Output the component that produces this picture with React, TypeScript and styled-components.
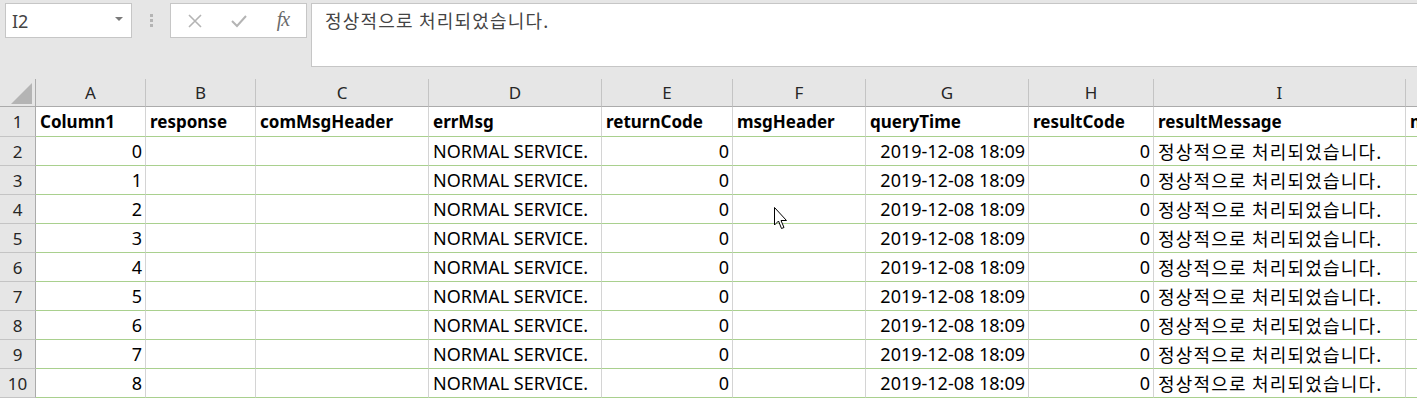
import React from 'react';
import { styled, createGlobalStyle } from 'styled-components';

const GlobalStyle = createGlobalStyle`
  html, body {
    margin: 0;
    padding: 0;
    background: #fff;
    overflow: hidden;
  }
  body {
    font-family: "Noto Sans", "Noto Sans CJK KR", sans-serif;
  }
`;

type Align = 'left' | 'right' | 'center';

interface Column {
  letter: string;
  width: number;
  header: string;
  align: Align;
  value: (i: number) => React.ReactNode;
}

const MESSAGE = '정상적으로 처리되었습니다.';

const columns: Column[] = [
  { letter: 'A', width: 110, header: 'Column1', align: 'right', value: (i) => String(i) },
  { letter: 'B', width: 110, header: 'response', align: 'left', value: () => '' },
  { letter: 'C', width: 173, header: 'comMsgHeader', align: 'left', value: () => '' },
  { letter: 'D', width: 173, header: 'errMsg', align: 'left', value: () => 'NORMAL SERVICE.' },
  { letter: 'E', width: 131, header: 'returnCode', align: 'right', value: () => '0' },
  { letter: 'F', width: 133, header: 'msgHeader', align: 'left', value: () => '' },
  { letter: 'G', width: 163, header: 'queryTime', align: 'right', value: () => '2019-12-08 18:09' },
  { letter: 'H', width: 125, header: 'resultCode', align: 'right', value: () => '0' },
  { letter: 'I', width: 252, header: 'resultMessage', align: 'left', value: () => <Hangul>{MESSAGE}</Hangul> },
  { letter: '', width: 0, header: 'msgBody', align: 'left', value: () => '' },
];

const dataRows = Array.from({ length: 9 }, (_, i) => i);

const App: React.FC = () => {
  return (
    <Page>
      <GlobalStyle />
      <FormulaBar>
        <NameBox>
          <NameText>I2</NameText>
          <Caret />
        </NameBox>
        <Grip>
          <Dot />
          <Dot />
          <Dot />
        </Grip>
        <EditButtons>
          <IconSlot>
            <svg width="14" height="14" viewBox="0 0 14 14">
              <path d="M1 1 L13 13 M13 1 L1 13" stroke="#b4b4b4" strokeWidth="1.6" fill="none" />
            </svg>
          </IconSlot>
          <IconSlot>
            <svg width="16" height="14" viewBox="0 0 16 14">
              <path d="M1 7 L6 12 L15 2" stroke="#b4b4b4" strokeWidth="2" fill="none" />
            </svg>
          </IconSlot>
          <IconSlot>
            <Fx>fx</Fx>
          </IconSlot>
        </EditButtons>
        <FormulaInput>
          <Hangul>{MESSAGE}</Hangul>
        </FormulaInput>
      </FormulaBar>

      <Sheet $widths={columns.map((c) => c.width)}>
        <Corner>
          <CornerTriangle />
        </Corner>
        {columns.map((c, idx) => (
          <ColHeader key={`h${idx}`} $last={idx === columns.length - 1}>
            {c.letter}
          </ColHeader>
        ))}

        <RowHeader>1</RowHeader>
        {columns.map((c, idx) => (
          <Cell key={`r1${idx}`} $bold $align="left" $last={idx === columns.length - 1}>
            {c.header}
          </Cell>
        ))}

        {dataRows.map((r) => (
          <React.Fragment key={r}>
            <RowHeader>{r + 2}</RowHeader>
            {columns.map((c, idx) => (
              <Cell key={idx} $align={c.align} $last={idx === columns.length - 1}>
                {c.value(r)}
              </Cell>
            ))}
          </React.Fragment>
        ))}

        <Pointer>
          <svg width="14" height="24" viewBox="0 0 14 24">
            <path
              d="M0.5 0.5 L0.5 18 L4.5 14 L7.5 21.5 L10 20.5 L7 13.5 L12.5 13.5 Z"
              fill="#fff"
              stroke="#000"
              strokeWidth="1"
              strokeLinejoin="miter"
            />
          </svg>
        </Pointer>
      </Sheet>
    </Page>
  );
};

const Page = styled.div`
  width: 1417px;
  height: 399px;
  overflow: hidden;
  background: #fff;
`;

const FormulaBar = styled.div`
  height: 79px;
  box-sizing: border-box;
  background: #e6e6e6;
  display: flex;
  align-items: flex-start;
  padding: 3px 0 0 5px;
`;

const NameBox = styled.div`
  width: 127px;
  height: 35px;
  box-sizing: border-box;
  background: #fff;
  border: 1px solid #c6c6c6;
  display: flex;
  align-items: center;
  justify-content: space-between;
  padding: 0 8px 0 6px;
`;

const NameText = styled.span`
  font-size: 18px;
  color: #444;
`;

const Caret = styled.span`
  width: 0;
  height: 0;
  border-left: 4px solid transparent;
  border-right: 4px solid transparent;
  border-top: 4px solid #7a7a7a;
  margin-top: -4px;
`;

const Grip = styled.div`
  width: 38px;
  height: 35px;
  display: flex;
  flex-direction: column;
  align-items: center;
  justify-content: center;
  gap: 2px;
`;

const Dot = styled.span`
  width: 3px;
  height: 3px;
  background: #b4b4b4;
`;

const EditButtons = styled.div`
  width: 137px;
  height: 35px;
  box-sizing: border-box;
  background: #fff;
  border: 1px solid #c6c6c6;
  display: grid;
  grid-template-columns: 47px 42px 46px;
  align-items: center;
  justify-items: center;
`;

const IconSlot = styled.span`
  display: flex;
  align-items: center;
  justify-content: center;
  height: 100%;
`;

const Fx = styled.span`
  font-family: "Liberation Serif", serif;
  font-style: italic;
  font-size: 20px;
  color: #6b6b6b;
  letter-spacing: -1px;
  margin-top: -3px;
`;

const FormulaInput = styled.div`
  flex: 1;
  height: 64px;
  margin-left: 4px;
  box-sizing: border-box;
  background: #fff;
  border: 1px solid #c6c6c6;
  border-right: none;
  padding: 4px 0 0 13px;
  font-size: 18px;
  line-height: 24px;
  color: #444;
`;

const Hangul = styled.span`
  font-family: "Noto Sans CJK KR", sans-serif;
  letter-spacing: 1.2px;
`;

const Sheet = styled.div<{ $widths: number[] }>`
  position: relative;
  display: grid;
  grid-template-columns: 36px ${(p) => p.$widths.map((w) => (w ? `${w}px` : '1fr')).join(' ')};
  grid-template-rows: 28px 30px repeat(9, 29px);
`;

const Corner = styled.div`
  background: #e6e6e6;
  border-right: 1px solid #ababab;
  border-bottom: 1px solid #ababab;
  position: relative;
`;

const CornerTriangle = styled.div`
  position: absolute;
  left: 11px;
  top: 4px;
  width: 21px;
  height: 21px;
  background: #b4b4b4;
  clip-path: polygon(100% 0, 100% 100%, 0 100%);
`;

const ColHeader = styled.div<{ $last?: boolean }>`
  background: #e6e6e6;
  box-sizing: border-box;
  border-right: ${(p) => (p.$last ? 'none' : '1px solid #c4c4c4')};
  border-bottom: 1px solid #ababab;
  display: flex;
  align-items: center;
  justify-content: center;
  font-size: 17px;
  color: #262626;
`;

const RowHeader = styled.div`
  background: #e6e6e6;
  box-sizing: border-box;
  border-right: 1px solid #ababab;
  border-bottom: 1px solid #c4c4c4;
  display: flex;
  align-items: center;
  justify-content: center;
  font-size: 17px;
  color: #262626;
`;

const Cell = styled.div<{ $align: Align; $bold?: boolean; $last?: boolean }>`
  box-sizing: border-box;
  border-right: ${(p) => (p.$last ? 'none' : '1px solid #d4d4d4')};
  border-bottom: 1px solid #a9d08e;
  display: flex;
  align-items: center;
  justify-content: ${(p) =>
    p.$align === 'right' ? 'flex-end' : p.$align === 'center' ? 'center' : 'flex-start'};
  padding: 0 3px 0 4px;
  font-size: ${(p) => (p.$bold ? '17px' : '18px')};
  font-weight: ${(p) => (p.$bold ? 700 : 400)};
  color: #000;
  white-space: nowrap;
  overflow: hidden;
`;

const Pointer = styled.div`
  position: absolute;
  left: 774px;
  top: 128px;
  pointer-events: none;
  line-height: 0;
`;

export default App;
